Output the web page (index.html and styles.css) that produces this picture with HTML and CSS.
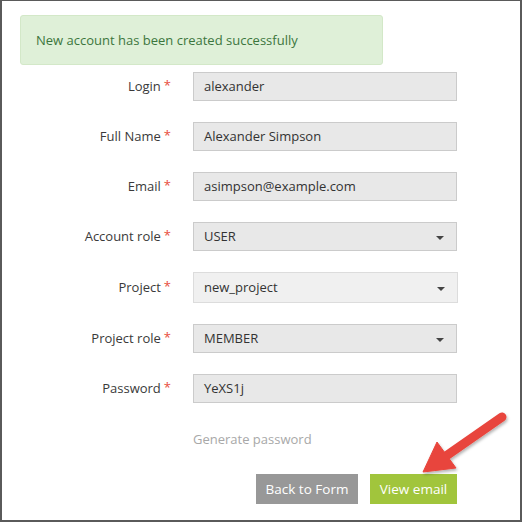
FILE: index.html
```html
<!DOCTYPE html>
<html>
<head>
<meta charset="utf-8">
<link rel="stylesheet" href="styles.css">
</head>
<body>
<div class="frame">
  <div class="alert">New account has been created successfully</div>
  <div class="form">
    <div class="row"><label class="lbl">Login<span class="req">*</span></label><div class="field">alexander</div></div>
    <div class="row"><label class="lbl">Full Name<span class="req">*</span></label><div class="field">Alexander Simpson</div></div>
    <div class="row"><label class="lbl">Email<span class="req">*</span></label><div class="field">asimpson@example.com</div></div>
    <div class="row"><label class="lbl">Account role<span class="req">*</span></label><div class="field select">USER<span class="caret"></span></div></div>
    <div class="row"><label class="lbl">Project<span class="req">*</span></label><div class="field select light">new_project<span class="caret"></span></div></div>
    <div class="row"><label class="lbl">Project role<span class="req">*</span></label><div class="field select">MEMBER<span class="caret"></span></div></div>
    <div class="row"><label class="lbl">Password<span class="req">*</span></label><div class="field">YeXS1j</div></div>
    <div class="gen">Generate password</div>
    <div class="actions">
      <button class="btn back">Back to Form</button>
      <button class="btn view">View email</button>
    </div>
  </div>
  <svg class="arrow" width="110" height="80" viewBox="410 400 110 80">
    <defs>
      <filter id="sh" x="-20%" y="-20%" width="150%" height="150%">
        <feDropShadow dx="1" dy="2" stdDeviation="1.5" flood-color="#000" flood-opacity="0.3"/>
      </filter>
    </defs>
    <g filter="url(#sh)" fill="#e8453c" stroke="#e8453c">
      <line x1="502" y1="417" x2="446" y2="456" stroke-width="9" stroke-linecap="round"/>
      <polygon points="423,472 437,442 456,468" stroke-width="1" stroke-linejoin="round"/>
    </g>
  </svg>
</div>
</body>
</html>
```
FILE: styles.css
```css
html, body {
  margin: 0;
  padding: 0;
  background: #fff;
}
.frame {
  position: relative;
  box-sizing: border-box;
  width: 522px;
  height: 522px;
  border-style: solid;
  border-color: #5a5a5a;
  border-width: 1px 2px 2px 2px;
  font-family: "Open Sans", "Noto Sans", sans-serif;
  font-size: 13px;
  color: #333;
  padding: 14px 0 0 18px;
}
.alert {
  box-sizing: border-box;
  width: 363px;
  height: 50px;
  background: #dff0d8;
  border: 1px solid #d3e8c8;
  border-radius: 3px;
  color: #3c763d;
  padding: 0 15px;
  line-height: 48px;
}
.form {
  margin-left: -18px;
  padding-top: 7px;
}
.row {
  display: flex;
  align-items: center;
  gap: 22px;
  margin-bottom: 21px;
}
.lbl {
  width: 169px;
  text-align: right;
  color: #3a3a3a;
  line-height: 18px;
  position: relative;
  top: -1px;
}
.req {
  color: #e74c3c;
  margin-left: 3px;
  font-size: 13px;
  position: relative;
  top: -1px;
}
.field {
  position: relative;
  box-sizing: border-box;
  width: 264px;
  height: 29px;
  background: #e8e8e8;
  border: 1px solid #cbcbcb;
  padding-left: 10px;
  line-height: 27px;
  color: #333;
}
.field.light {
  width: 265px;
  height: 31px;
  line-height: 29px;
  background: #f0f0f0;
  border-color: #dcdcdc;
}
.caret {
  position: absolute;
  right: 12px;
  top: 50%;
  margin-top: -1px;
  width: 0;
  height: 0;
  border-left: 4px solid transparent;
  border-right: 4px solid transparent;
  border-top: 4px solid #444;
}
.gen {
  margin-left: 191px;
  margin-top: 27px;
  color: #a8a8a8;
  line-height: 18px;
}
.actions {
  display: flex;
  justify-content: flex-end;
  gap: 12px;
  width: 455px;
  margin-top: 26px;
}
.btn {
  height: 30px;
  border: none;
  color: #fff;
  font-family: "Open Sans", "Noto Sans", sans-serif;
  font-size: 13.5px;
  padding: 0;
  cursor: pointer;
}
.back {
  width: 102px;
  background: #989898;
}
.view {
  width: 87px;
  background: #a1c53c;
}
.arrow {
  position: absolute;
  left: 408px;
  top: 399px;
  overflow: visible;
}
```
